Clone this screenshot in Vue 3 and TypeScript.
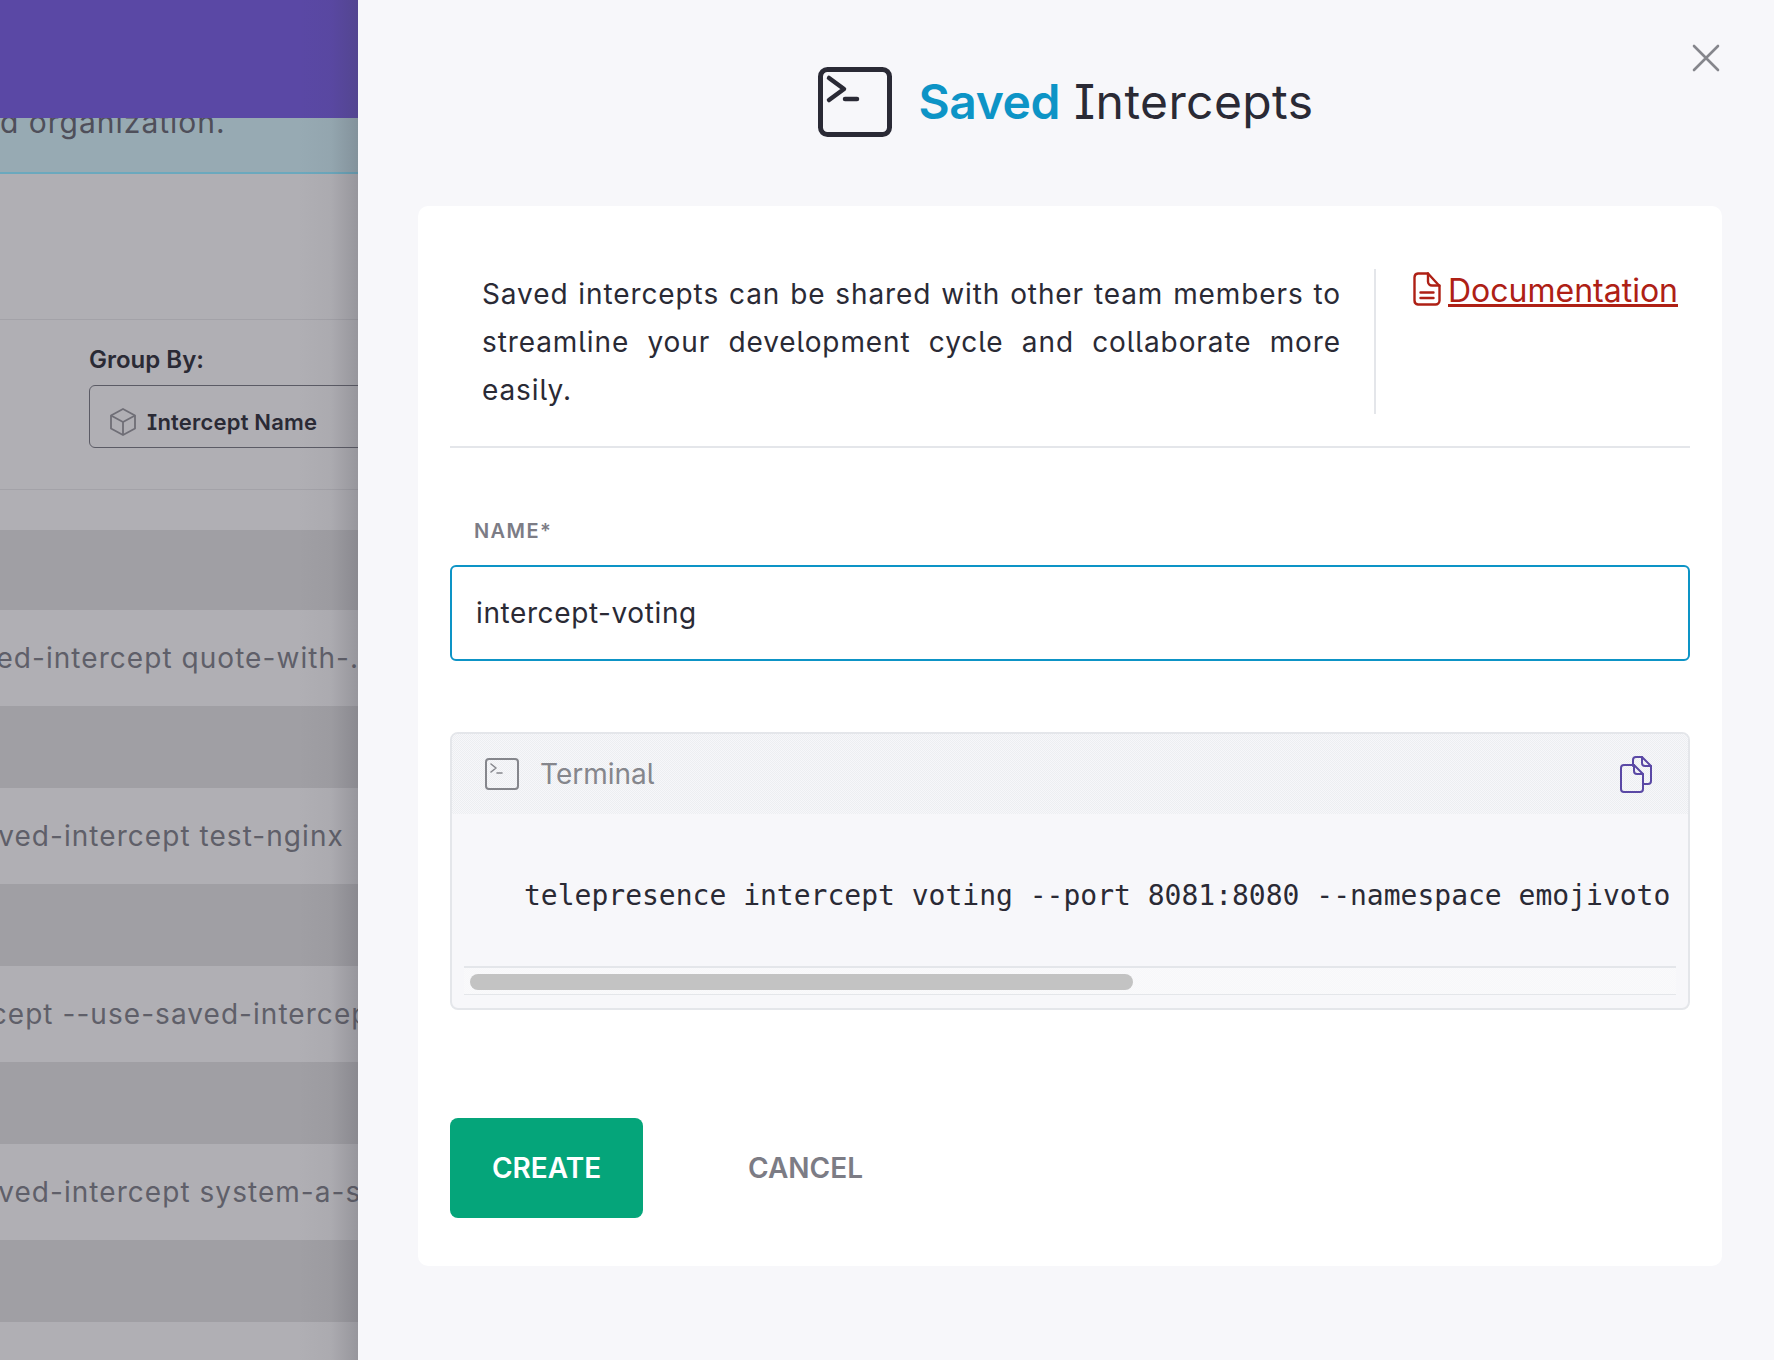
<script setup lang="ts">
const rows: { text: string; cut: number }[] = [
  { text: 'saved-intercept quote-with-...', cut: 52 },
  { text: 'saved-intercept test-nginx', cut: 34 },
  { text: 'telepresence intercept --use-saved-intercept', cut: 267 },
  { text: 'saved-intercept system-a-service', cut: 34 },
]
</script>

<template>
  <div class="page">
    <aside class="behind">
      <div class="top-bar"></div>
      <div class="notice"><span class="notice-text">d organization.</span></div>
      <div class="spacer"></div>
      <div class="filters">
        <div class="filter">
          <div class="filter-label">Group By:</div>
          <div class="select">
            <svg class="cube" viewBox="0 0 26 28" fill="none" stroke="#6f6e76" stroke-width="1.8" stroke-linejoin="round">
              <path d="M13 1 25 7.500V20.500L13 27 1 20.500V7.500Z" />
              <path d="M1 7.500 13 14 25 7.500M13 14V27" />
            </svg>
            <span>Intercept Name</span>
          </div>
        </div>
      </div>
      <div class="rows">
        <template v-for="row in rows" :key="row.text">
          <div class="row dark"></div>
          <div class="row light">
            <span class="row-text" :style="{ marginLeft: -row.cut + 'px' }">{{ row.text }}</span>
          </div>
        </template>
        <div class="row dark"></div>
        <div class="row light last">
          <span class="row-text" :style="{ marginLeft: '-34px' }">saved-intercept test-kit</span>
        </div>
      </div>
      <div class="edge-shadow"></div>
    </aside>

    <main class="panel">
      <button class="close" aria-label="Close">
        <svg viewBox="0 0 28 28" width="28" height="28" fill="none" stroke="#85868c" stroke-width="2.6" stroke-linecap="round">
          <path d="M2 2 26 26M26 2 2 26" />
        </svg>
      </button>

      <header class="title-row">
        <svg class="title-icon" viewBox="0 0 74 70" fill="none" stroke="#2a2a35" stroke-linecap="round" stroke-linejoin="round">
          <rect x="2.500" y="2.500" width="69" height="65" rx="7" stroke-width="5" />
          <path d="M11 11 26 22 11 33" stroke-width="4.500" />
          <path d="M27 32H39" stroke-width="4.500" />
        </svg>
        <h1 class="title"><span class="accent">Saved</span> Intercepts</h1>
      </header>

      <section class="card">
        <div class="intro">
          <p class="intro-text">Saved intercepts can be shared with other team members to streamline your development cycle and collaborate more easily.</p>
          <div class="intro-link">
            <svg class="doc-icon" viewBox="0 0 28 34" fill="none" stroke="#ae2015" stroke-width="2.400" stroke-linecap="round" stroke-linejoin="round">
              <path d="M5 1.500H15L26.500 14V28.500A4 4 0 0 1 22.500 32.500H5A4 4 0 0 1 1.500 28.500V5.500A4 4 0 0 1 5 1.500Z" />
              <path d="M15 1.500V9.500A4 4 0 0 0 19 13.500H26.500" />
              <path d="M7.500 20.500H20.500M7.500 26H20.500" />
            </svg>
            <a class="doc-link" href="#">Documentation</a>
          </div>
        </div>

        <label class="field-label" for="intercept-name">NAME*</label>
        <input id="intercept-name" class="field" type="text" value="intercept-voting" />

        <div class="terminal">
          <div class="terminal-head">
            <svg class="term-icon" viewBox="0 0 34 32" fill="none" stroke="#85868c" stroke-linecap="round" stroke-linejoin="round">
              <rect x="1" y="1" width="32" height="30" rx="3" stroke-width="2" />
              <path d="M6 6 11 10 6 14M12 15H17" stroke-width="1.600" />
            </svg>
            <span class="term-name">Terminal</span>
            <svg class="copy-icon" viewBox="0 0 32 37" fill="none" stroke="#5a48a5" stroke-width="2" stroke-linecap="round" stroke-linejoin="round">
              <path d="M13 10V4A3 3 0 0 1 16 1H22L31 10V25A3 3 0 0 1 28 28H23" />
              <path d="M22 1V7A3 3 0 0 0 25 10H31" />
              <path d="M4 9H14L23 18V33A3 3 0 0 1 20 36H4A3 3 0 0 1 1 33V12A3 3 0 0 1 4 9Z" />
              <path d="M14 9V15A3 3 0 0 0 17 18H23" />
            </svg>
          </div>
          <div class="terminal-body">
            <code class="command">telepresence intercept voting --port 8081:8080 --namespace emojivoto</code>
          </div>
          <div class="scroll-track"><div class="scroll-thumb"></div></div>
        </div>

        <div class="actions">
          <button class="btn-create">CREATE</button>
          <button class="btn-cancel">CANCEL</button>
        </div>
      </section>
    </main>
  </div>
</template>

<style>
html, body { margin: 0; padding: 0; background: #f7f7fa; }
</style>

<style scoped>
.page {
  display: flex;
  width: 1774px;
  height: 1360px;
  overflow: hidden;
  font-family: Inter, "Liberation Sans", sans-serif;
  font-feature-settings: "cv08", "ss02";
  color: #2a2a35;
}
.behind {
  position: relative;
  flex: 0 0 358px;
  width: 358px;
  height: 1360px;
  overflow: hidden;
  background: #b0afb4;
}
.top-bar { height: 118px; background: #5a48a5; position: relative; z-index: 1; }
.notice {
  display: flow-root;
  height: 54px;
  background: #97aab3;
  border-bottom: 2px solid #6ba8bd;
  position: relative;
  white-space: nowrap;
}
.notice-text {
  display: block;
  margin-top: -18px;
  font-size: 30px;
  line-height: 44px;
  letter-spacing: 1px;
  color: #4f4f5a;
}
.spacer { height: 145px; }
.filters {
  height: 171px;
  border-top: 1px solid #a3a2a8;
  border-bottom: 1px solid #a3a2a8;
  box-sizing: border-box;
  padding: 24px 0 0 89px;
}
.filter-label { font-size: 24px; line-height: 32px; font-weight: 600; color: #2a2a35; margin-bottom: 9px; }
.select {
  display: flex;
  align-items: center;
  gap: 11px;
  width: 400px;
  height: 63px;
  box-sizing: border-box;
  padding: 10px 0 0 20px;
  border: 1.5px solid #5b5b65;
  border-radius: 6px;
  font-size: 22px;
  letter-spacing: 0.2px;
  font-weight: 600;
  white-space: nowrap;
}
.cube { width: 26px; height: 28px; flex: none; }
.rows { margin-top: 40px; }
.row { display: flex; align-items: center; white-space: nowrap; overflow: hidden; }
.dark { height: 82px; background: #a09fa4; }
.rows > .dark:first-child { height: 80px; }
.light { height: 96px; background: #b0afb4; }
.last { padding-top: 3px; }
.row-text { font-size: 28px; letter-spacing: 1.050px; color: #5f5f69; }
.edge-shadow {
  position: absolute;
  top: 0;
  right: 0;
  bottom: 0;
  width: 60px;
  z-index: 2;
  background: linear-gradient(to right, rgba(60, 60, 70, 0), rgba(60, 60, 70, 0.04) 55%, rgba(60, 60, 70, 0.22));
}

.panel {
  position: relative;
  flex: 1;
  background: #f7f7fa;
  padding: 0 52px 0 60px;
  box-sizing: border-box;
}
.close {
  position: absolute;
  top: 44px;
  right: 54px;
  padding: 0;
  border: 0;
  background: none;
  width: 28px;
  height: 28px;
}
.title-row {
  display: flex;
  align-items: center;
  justify-content: center;
  gap: 27px;
  height: 206px;
  box-sizing: border-box;
  padding: 0 9px 0 0;
}
.title-icon { width: 74px; height: 70px; flex: none; margin-bottom: 2px; }
.title { margin: 0 0 3px; font-size: 48px; font-weight: 400; line-height: 1; letter-spacing: 0.4px; }
.accent { color: #0d94c6; font-weight: 600; letter-spacing: -0.400px; }
.card {
  background: #fff;
  border-radius: 10px;
  height: 1060px;
  box-sizing: border-box;
  padding: 0 32px;
}
.intro {
  display: flex;
  height: 242px;
  box-sizing: border-box;
  padding-top: 63px;
  border-bottom: 2px solid #e4e6ea;
}
.intro-text {
  width: 859px;
  margin: 1px 0 0 32px;
  font-size: 28px;
  line-height: 48px;
  letter-spacing: 0.900px;
  text-align: justify;
  height: 144px;
}
.intro-link {
  display: flex;
  align-items: flex-start;
  gap: 7px;
  margin-left: 33px;
  padding-left: 37px;
  height: 145px;
  border-left: 2px solid #e4e6ea;
}
.doc-icon { width: 28px; height: 34px; flex: none; margin-top: 3px; }
.doc-link { margin-top: 2px; color: #ae2015; font-size: 32px; line-height: 40px; text-decoration: underline; }
.field-label {
  display: block;
  margin: 70px 0 0 24px;
  font-size: 20px;
  line-height: 26px;
  font-weight: 600;
  letter-spacing: 1.400px;
  color: #7c7c85;
}
.field {
  display: block;
  width: 100%;
  height: 96px;
  margin-top: 21px;
  box-sizing: border-box;
  padding: 0 24px;
  border: 2px solid #0d94c6;
  border-radius: 6px;
  background: #fff;
  outline: none;
  font: 400 28px Inter, sans-serif;
  letter-spacing: 0.6px;
  color: #2a2a35;
}
.terminal {
  margin-top: 71px;
  height: 278px;
  box-sizing: border-box;
  border: 2px solid #e4e6ea;
  border-radius: 8px;
  background: #f7f7fa;
  overflow: hidden;
}
.terminal-head {
  display: flex;
  align-items: center;
  height: 80px;
  padding: 0 36px 0 33px;
  background: repeating-conic-gradient(#f7f7fa 0 25%, #eceef1 0 50%) 0 0 / 2px 2px;
}
.term-icon { width: 34px; height: 32px; flex: none; }
.term-name { margin-left: 21px; font-size: 28px; color: #85868c; flex: 1; }
.copy-icon { width: 32px; height: 37px; flex: none; }
.terminal-body {
  height: 152px;
  box-sizing: border-box;
  padding: 11px 0 0 72px;
  display: flex;
  align-items: center;
  white-space: nowrap;
  overflow: hidden;
}
.command { font-family: "DejaVu Sans Mono", monospace; font-size: 28px; color: #2a2a35; }
.scroll-track {
  height: 29px;
  margin: 0 12px;
  box-sizing: border-box;
  border-top: 2px solid #e4e6ea;
  border-bottom: 1px solid #e4e6ea;
  background: repeating-conic-gradient(#f7f7fa 0 25%, #fafafb 0 50%) 0 0 / 2px 2px;
  padding: 6px 6px 0;
}
.scroll-thumb { width: 663px; height: 16px; border-radius: 8px; background: #c3c3c3; }
.actions {
  display: flex;
  align-items: center;
  margin-top: 108px;
}
.btn-create {
  width: 193px;
  height: 100px;
  border: 0;
  border-radius: 8px;
  background: #05a57a;
  color: #fff;
  font: 600 28px Inter, sans-serif;
}
.btn-cancel {
  margin-left: 105px;
  padding: 0;
  border: 0;
  background: none;
  color: #7c7c85;
  font: 600 28px Inter, sans-serif;
}
</style>
